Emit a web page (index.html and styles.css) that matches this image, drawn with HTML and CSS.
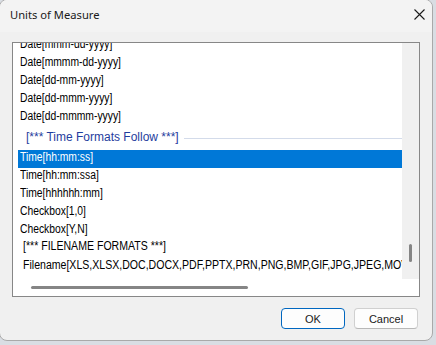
FILE: index.html
```html
<!DOCTYPE html>
<html lang="en">
<head>
<meta charset="UTF-8">
<title>Units of Measure</title>
<link rel="stylesheet" href="styles.css">
</head>
<body>

<div class="dialog">
  <div class="dialog-title">
    <span class="title-text">Units of Measure</span>
    <span class="title-close">
      <svg width="11" height="11" viewBox="0 0 11 11"><path d="M0.5 0.5 L10.5 10.5 M10.5 0.5 L0.5 10.5" stroke="#1a1a1a" stroke-width="1.1" fill="none"/></svg>
    </span>
  </div>

  <div class="units-list">
    <div class="list-view">
      <div class="list-items">
        <div class="item"><span class="item-text">Date[mmm-dd-yyyy]</span></div>
        <div class="item"><span class="item-text">Date[mmmm-dd-yyyy]</span></div>
        <div class="item"><span class="item-text">Date[dd-mm-yyyy]</span></div>
        <div class="item"><span class="item-text">Date[dd-mmm-yyyy]</span></div>
        <div class="item"><span class="item-text">Date[dd-mmmm-yyyy]</span></div>
        <div class="group-header">
          <span class="group-text">[*** Time Formats Follow ***]</span>
          <span class="group-line"></span>
        </div>
        <div class="item selected"><span class="item-text">Time[hh:mm:ss]</span></div>
        <div class="item"><span class="item-text">Time[hh:mm:ssa]</span></div>
        <div class="item"><span class="item-text">Time[hhhhhh:mm]</span></div>
        <div class="item"><span class="item-text">Checkbox[1,0]</span></div>
        <div class="item"><span class="item-text">Checkbox[Y,N]</span></div>
        <div class="item indent header-plain"><span class="item-text wide">[*** FILENAME FORMATS ***]</span></div>
        <div class="item indent"><span class="item-text wide">Filename[XLS,XLSX,DOC,DOCX,PDF,PPTX,PRN,PNG,BMP,GIF,JPG,JPEG,MOV,MP4,TXT,CSV]</span></div>
      </div>
    </div>
    <div class="vscroll"><span class="vthumb"></span></div>
    <div class="hscroll"><span class="hthumb"></span></div>
    <div class="scroll-corner"></div>
  </div>

  <div class="dialog-buttons">
    <button class="btn btn-default">OK</button>
    <button class="btn">Cancel</button>
  </div>
</div>

</body>
</html>
```

FILE: styles.css
```css
body {
  margin: 0;
  background-color: #d9dde3;
  overflow: hidden;
  font-family: "Liberation Sans", Arial, sans-serif;
}

/* okno dialogu */
.dialog {
  width: 434px;
  height: 342px;
  margin: -1px 0 0 -1px;
  box-sizing: border-box;
  border: 1px solid #a9a9a9;
  border-radius: 8px;
  background-color: #f0f0f0;
  overflow: hidden;
}

.dialog-title {
  height: 32px;
  display: flex;
  align-items: flex-start;
  justify-content: space-between;
  background-color: #f3f3f3;
}

.title-text {
  font-family: "Noto Sans", sans-serif;
  font-size: 11.2px;
  line-height: 16px;
  color: #1a1a1a;
  padding: 7px 0 0 10px;
}

.title-close {
  width: 11px;
  height: 11px;
  margin: 9px 7px 0 0;
  display: flex;
}

/* lista jednostek */
.units-list {
  width: 408px;
  height: 255px;
  margin: 10px 0 0 12px;
  box-sizing: border-box;
  border: 1px solid #878787;
  background-color: #fff;
  display: grid;
  grid-template-columns: 1fr 17px;
  grid-template-rows: 1fr 17px;
}

.list-view {
  overflow: hidden;
  padding-left: 5px;
}

.list-items {
  margin-top: -6px;
}

.item {
  height: 18px;
  line-height: 15px;
  padding-left: 2px;
  font-size: 12px;
  color: #000;
  white-space: nowrap;
}

/* wąska czcionka listy - zwężenie tekstu */
.item-text {
  display: inline-block;
  transform: scaleX(0.86);
  transform-origin: 0 0;
}

.item-text.wide {
  transform: scaleX(0.88);
}

.item.selected {
  background-color: #0078d7;
  color: #fff;
}

.item.indent {
  padding-left: 5px;
}

.item.header-plain {
  line-height: 13px;
}

.group-header {
  height: 23px;
  display: flex;
  align-items: flex-start;
}

.group-text {
  font-size: 12px;
  line-height: 15px;
  padding: 3px 0 0 8px;
  color: #1f3d9e;
  white-space: nowrap;
}

.group-line {
  flex: 1;
  height: 1px;
  margin: 11px 0 0 5px;
  background-color: #d3dbea;
}

.vscroll {
  background-color: #f0f0f0;
}

.vthumb {
  display: block;
  width: 3px;
  height: 18px;
  margin: 201px 0 0 7px;
  border-radius: 2px;
  background-color: #858585;
}

.hscroll {
  background-color: #fff;
}

.hthumb {
  display: block;
  width: 217px;
  height: 3px;
  margin: 7px 0 0 18px;
  border-radius: 2px;
  background-color: #858585;
}

.scroll-corner {
  background-color: #fff;
}

/* przyciski */
.dialog-buttons {
  display: flex;
  justify-content: flex-end;
  gap: 9px;
  margin: 11px 14px 0 0;
}

.btn {
  width: 64px;
  height: 21px;
  box-sizing: border-box;
  border: 1px solid #d0d0d0;
  border-bottom-color: #b8b8b8;
  border-radius: 4px;
  background-color: #fdfdfd;
  font-family: "Liberation Sans", Arial, sans-serif;
  font-size: 11px;
  color: #1a1a1a;
  padding: 0;
}

.btn-default {
  border-color: #0067c0;
}
```
